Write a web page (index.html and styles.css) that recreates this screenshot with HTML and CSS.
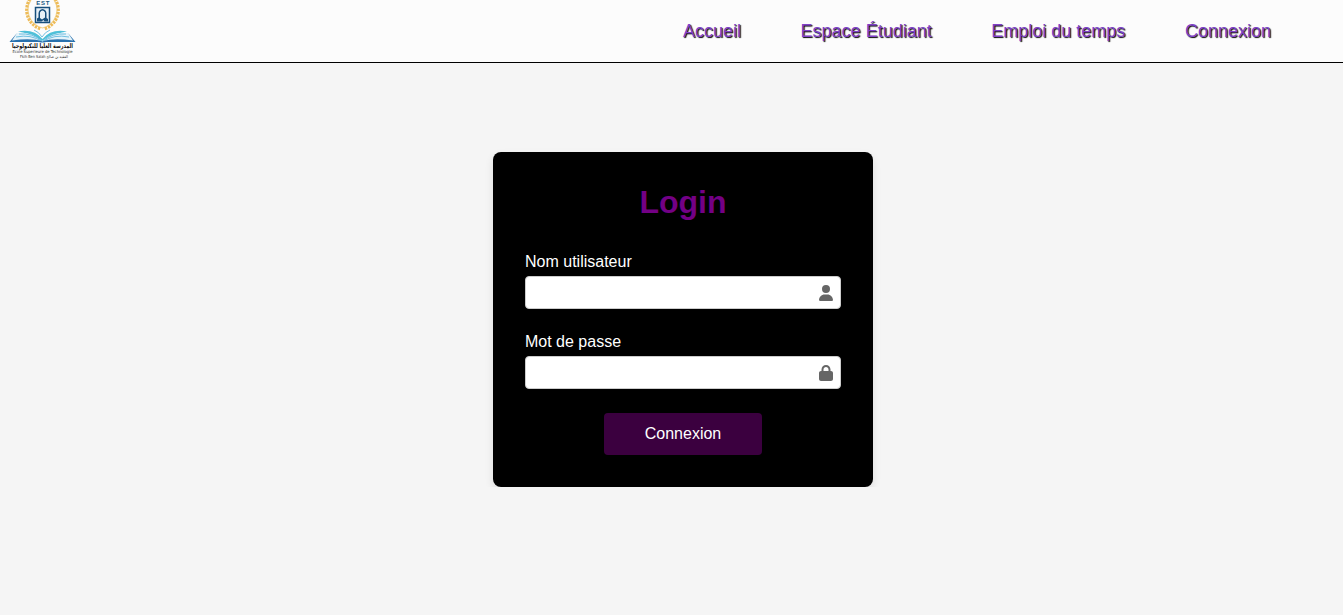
FILE: index.html
```
<!DOCTYPE html>
<html lang="fr">
<head>
<meta charset="utf-8">
<title>Connexion</title>
<link rel="stylesheet" href="styles.css">
</head>
<body>
<header class="navbar">
  <svg class="logo" viewBox="0 0 90 62" width="90" height="62" role="img" aria-label="EST">
    <path class="wreath-stem" d="M31 0C25 9 28 24 42.500 28C57 24 60 9 54 0"/>
    <path class="wreath-leaves" d="M30 -1C23 9 27 25 41 29M55 -1C62 9 58 25 44 29"/>
    <text class="logo-est" x="42.8" y="4.800" textLength="13">EST</text>
    <rect class="emblem" x="35.500" y="7.500" width="14" height="15"/>
    <path class="emblem-arch" d="M37 21.500v-3l1.500-1V13q.5-3.500 4-4q3.500.5 4 4v5l1.500 1v2.500h-3.500l-1-1.500-2 1.500zM40 12.500v5.500l2 1.500 3-2v-5q-1-2-2.500-2t-2.500 2z"/>
    <path class="book-teal" d="M42.500 39Q34 28.500 18 31.500Q30 33 42.500 41Q55 33 67 31.500Q51 28.500 42.500 39z"/>
    <path class="book-pages" d="M17 33Q31 31 42 41Q54 31 68 33L74 41Q54 37 42.500 42Q31 37 11 41z"/>
    <path class="book-lines" d="M19 34Q33 33 42 41M16 37Q31 34 42 41.500M66 34Q52 33 43 41M69 37Q54 34 43 41.500M34 30q5 2 8 7q3-5 8-7"/>
    <path class="book-cover" d="M17 33L9.500 42H39q3.500 1 7 0H75.500L68 33L73 40.500Q53 37.500 42.500 41.500Q32 37.500 12 40.500z"/>
    <text class="logo-arabic" x="42.500" y="48.200" textLength="61" lengthAdjust="spacingAndGlyphs" direction="rtl">المدرسة العليا للتكنولوجيا</text>
    <text class="logo-name" x="42.500" y="52.800" textLength="60" lengthAdjust="spacingAndGlyphs">Ecole Superieure de Technologie</text>
    <text class="logo-city" x="44" y="57.500" textLength="48" lengthAdjust="spacingAndGlyphs">Fkih Ben Salah الفقيه بن صالح</text>
  </svg>
  <nav class="links">
    <a class="link">Accueil</a>
    <a class="link">Espace Étudiant</a>
    <a class="link">Emploi du temps</a>
    <a class="link">Connexion</a>
  </nav>
</header>
<main class="page">
  <form class="card">
    <h1 class="title">Login</h1>
    <label class="label" for="user">Nom utilisateur</label>
    <div class="field">
      <input class="input" id="user" type="text">
      <svg class="icon" viewBox="0 0 448 512"><path d="M224 256A128 128 0 1 0 224 0a128 128 0 1 0 0 256zm-45.700 48C79.800 304 0 383.800 0 482.300C0 498.700 13.300 512 29.700 512H418.300c16.400 0 29.700-13.300 29.700-29.700C448 383.800 368.200 304 269.700 304H178.300z"/></svg>
    </div>
    <label class="label" for="pass">Mot de passe</label>
    <div class="field">
      <input class="input" id="pass" type="password">
      <svg class="icon" viewBox="0 0 448 512"><path d="M144 144v48H304V144c0-44.200-35.800-80-80-80s-80 35.800-80 80zM80 192V144C80 64.500 144.500 0 224 0s144 64.500 144 144v48h16c35.300 0 64 28.700 64 64V448c0 35.300-28.700 64-64 64H64c-35.300 0-64-28.700-64-64V256c0-35.300 28.700-64 64-64H80z"/></svg>
    </div>
    <button class="submit" type="button">Connexion</button>
  </form>
</main>
</body>
</html>
```
FILE: styles.css
```
* { box-sizing: border-box; }
body {
  margin: 0;
  background: #f5f5f5;
  font-family: "Liberation Sans", Arial, sans-serif;
}
.navbar {
  display: flex;
  justify-content: space-between;
  align-items: center;
  height: 63px;
  padding-right: 72px;
  background: #fcfcfc;
  border-bottom: 1px solid #000;
}
.logo { display: block; }
.links { display: flex; gap: 59.6px; }
.link {
  color: #8040c8;
  font-size: 18px;
  line-height: 21px;
  text-shadow: 1px 1px 1px #000;
}
.wreath-stem { fill: none; stroke: #f3d797; stroke-width: 1.200; }
.wreath-leaves { fill: none; stroke: #edbb58; stroke-width: 3; stroke-dasharray: 2.400 1; }
.logo-est { font: bold 6px "Liberation Sans", sans-serif; fill: #235b83; text-anchor: middle; }
.emblem { fill: #e8f1f7; stroke: #174f7c; stroke-width: 1.500; }
.emblem-arch { fill: #174f7c; fill-rule: evenodd; }
.book-teal { fill: #4fc0d8; }
.book-pages { fill: #e4f3fa; }
.book-lines { fill: none; stroke: #63b9dc; stroke-width: 0.900; }
.book-cover { fill: #2870ad; }
.logo-arabic { font: bold 6.500px "DejaVu Sans", sans-serif; fill: #111; text-anchor: middle; }
.logo-name { font: 4px "DejaVu Sans", sans-serif; fill: #333; text-anchor: middle; }
.logo-city { font: 4px "DejaVu Sans", sans-serif; fill: #333; text-anchor: middle; }
.page {
  display: flex;
  justify-content: center;
  padding: 89px 0 0 23px;
}
.card {
  display: flex;
  flex-direction: column;
  width: 380px;
  height: 335px;
  padding: 32px;
  background: #000;
  border-radius: 8px;
  box-shadow: 0 4px 8px rgba(0, 0, 0, 0.1);
}
.title {
  margin: 0 0 32px;
  color: #730085;
  font-size: 32px;
  line-height: 37px;
  text-align: center;
}
.label {
  margin-bottom: 5px;
  color: #fff;
  font-size: 16px;
  line-height: 18px;
}
.field {
  position: relative;
  height: 33px;
  margin-bottom: 24px;
}
.input {
  display: block;
  width: 100%;
  height: 33px;
  padding: 8px;
  border: 1px solid #ccc;
  border-radius: 4px;
  background: #fff;
}
.icon {
  position: absolute;
  top: 9px;
  right: 8px;
  width: 14px;
  height: 16px;
  fill: #666;
}
.submit {
  width: 158px;
  height: 42px;
  margin: 0 auto;
  padding: 0;
  border: 0;
  border-radius: 4px;
  background: #3b003f;
  color: #fff;
  font: 16px "Liberation Sans", Arial, sans-serif;
}
```
